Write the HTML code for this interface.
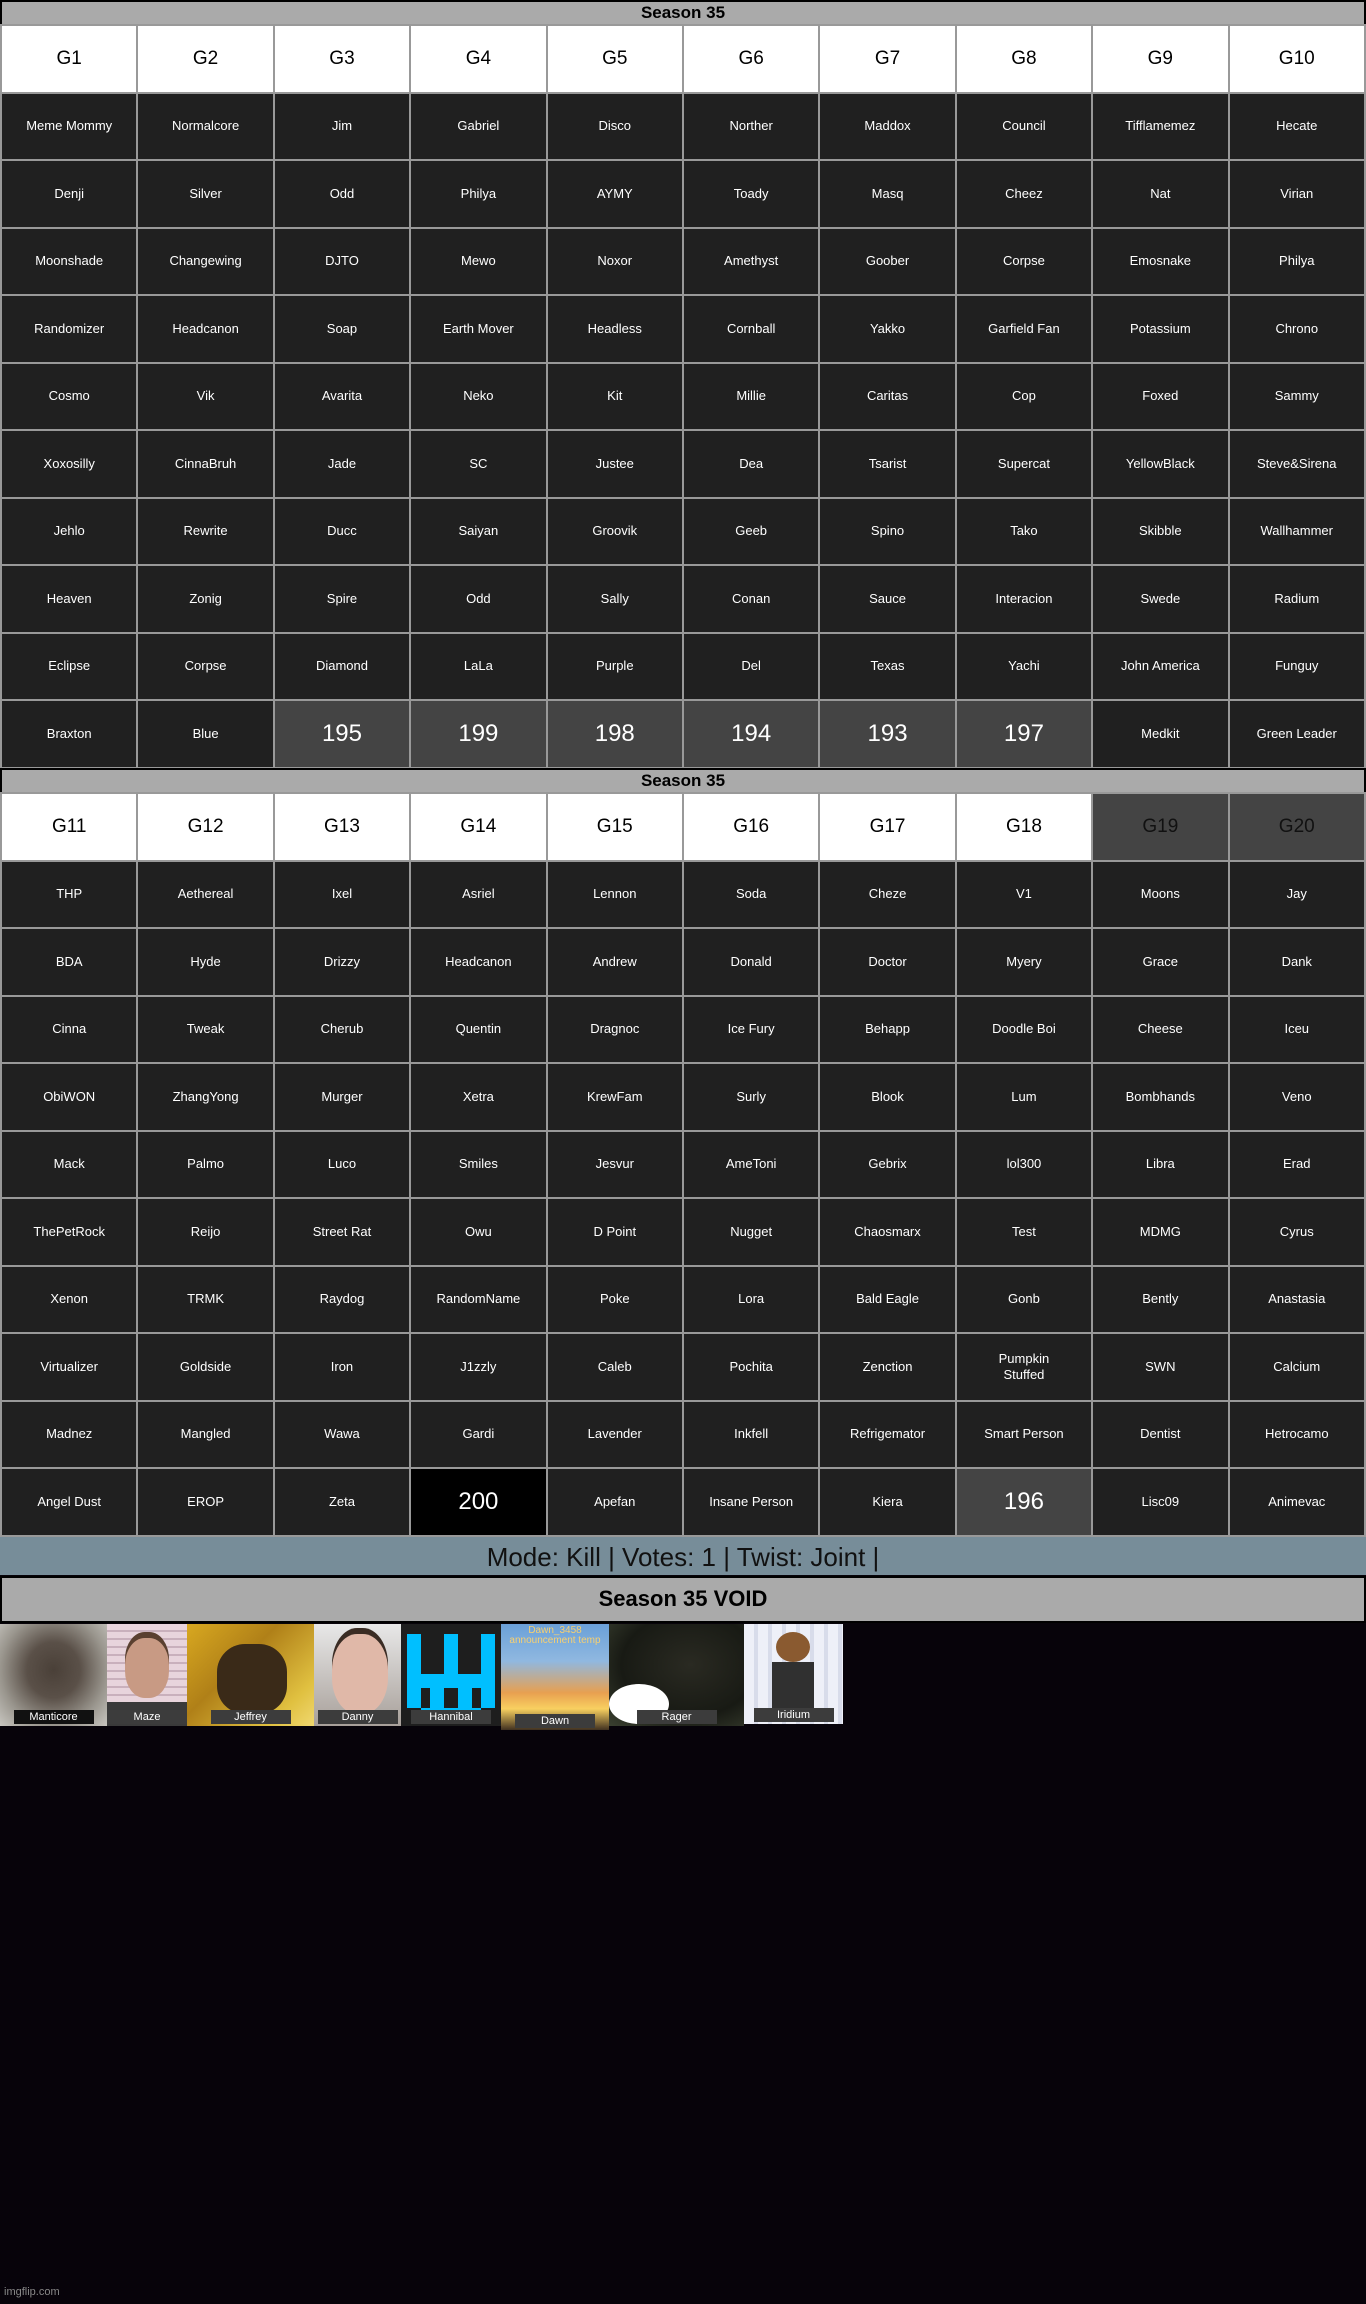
<!DOCTYPE html>
<html><head><meta charset="utf-8"><style>
*{margin:0;padding:0;box-sizing:border-box}
html,body{width:1366px;height:2304px;background:#07030a;overflow:hidden;font-family:"Liberation Sans",sans-serif}
.title{position:absolute;left:0;width:1366px;height:26px;background:#aaa;border:2px solid #000;text-align:center;font-weight:bold;font-size:17px;line-height:22px;color:#000}
table{position:absolute;left:0;width:1366px;border-collapse:collapse;table-layout:fixed}
td{border:2px solid #999;background:#202020;color:#fff;text-align:center;vertical-align:middle;font-size:13px;height:67.5px;line-height:16px}
tr.h td{background:#fff;color:#000;font-size:19px}
tr.h td.d{background:#444;color:#111}
td.n{background:#444;font-size:24px}
td.b{background:#000;font-size:24px}
.mode{position:absolute;left:0;top:1535px;width:1366px;height:40px;background:#778d99;text-align:center;font-size:26px;line-height:40px;color:#111;border-top:2px solid #999}
.void{position:absolute;left:0;top:1576px;width:1366px;height:47px;background:#aaa;border:2px solid #000;text-align:center;font-weight:bold;font-size:22px;line-height:42px;color:#000}
.im{position:absolute;top:1624px;height:102px;overflow:hidden}
.lb{position:absolute;bottom:2px;left:50%;transform:translateX(-50%);width:80px;height:14px;background:#3c3c3c;color:#fff;font-size:11px;line-height:14px;text-align:center}
.wm{position:absolute;left:4px;top:2286px;color:#888;font-size:11px}
</style></head><body>
<div class="title" style="top:0">Season 35</div>
<table style="top:24px">
<tr class="h"><td>G1</td><td>G2</td><td>G3</td><td>G4</td><td>G5</td><td>G6</td><td>G7</td><td>G8</td><td>G9</td><td>G10</td></tr>
<tr><td>Meme Mommy</td><td>Normalcore</td><td>Jim</td><td>Gabriel</td><td>Disco</td><td>Norther</td><td>Maddox</td><td>Council</td><td>Tifflamemez</td><td>Hecate</td></tr>
<tr><td>Denji</td><td>Silver</td><td>Odd</td><td>Philya</td><td>AYMY</td><td>Toady</td><td>Masq</td><td>Cheez</td><td>Nat</td><td>Virian</td></tr>
<tr><td>Moonshade</td><td>Changewing</td><td>DJTO</td><td>Mewo</td><td>Noxor</td><td>Amethyst</td><td>Goober</td><td>Corpse</td><td>Emosnake</td><td>Philya</td></tr>
<tr><td>Randomizer</td><td>Headcanon</td><td>Soap</td><td>Earth Mover</td><td>Headless</td><td>Cornball</td><td>Yakko</td><td>Garfield Fan</td><td>Potassium</td><td>Chrono</td></tr>
<tr><td>Cosmo</td><td>Vik</td><td>Avarita</td><td>Neko</td><td>Kit</td><td>Millie</td><td>Caritas</td><td>Cop</td><td>Foxed</td><td>Sammy</td></tr>
<tr><td>Xoxosilly</td><td>CinnaBruh</td><td>Jade</td><td>SC</td><td>Justee</td><td>Dea</td><td>Tsarist</td><td>Supercat</td><td>YellowBlack</td><td>Steve&amp;Sirena</td></tr>
<tr><td>Jehlo</td><td>Rewrite</td><td>Ducc</td><td>Saiyan</td><td>Groovik</td><td>Geeb</td><td>Spino</td><td>Tako</td><td>Skibble</td><td>Wallhammer</td></tr>
<tr><td>Heaven</td><td>Zonig</td><td>Spire</td><td>Odd</td><td>Sally</td><td>Conan</td><td>Sauce</td><td>Interacion</td><td>Swede</td><td>Radium</td></tr>
<tr><td>Eclipse</td><td>Corpse</td><td>Diamond</td><td>LaLa</td><td>Purple</td><td>Del</td><td>Texas</td><td>Yachi</td><td>John America</td><td>Funguy</td></tr>
<tr><td>Braxton</td><td>Blue</td><td class="n">195</td><td class="n">199</td><td class="n">198</td><td class="n">194</td><td class="n">193</td><td class="n">197</td><td>Medkit</td><td>Green Leader</td></tr>
</table>
<div class="title" style="top:768px">Season 35</div>
<table style="top:792px">
<tr class="h"><td>G11</td><td>G12</td><td>G13</td><td>G14</td><td>G15</td><td>G16</td><td>G17</td><td>G18</td><td class="d">G19</td><td class="d">G20</td></tr>
<tr><td>THP</td><td>Aethereal</td><td>Ixel</td><td>Asriel</td><td>Lennon</td><td>Soda</td><td>Cheze</td><td>V1</td><td>Moons</td><td>Jay</td></tr>
<tr><td>BDA</td><td>Hyde</td><td>Drizzy</td><td>Headcanon</td><td>Andrew</td><td>Donald</td><td>Doctor</td><td>Myery</td><td>Grace</td><td>Dank</td></tr>
<tr><td>Cinna</td><td>Tweak</td><td>Cherub</td><td>Quentin</td><td>Dragnoc</td><td>Ice Fury</td><td>Behapp</td><td>Doodle Boi</td><td>Cheese</td><td>Iceu</td></tr>
<tr><td>ObiWON</td><td>ZhangYong</td><td>Murger</td><td>Xetra</td><td>KrewFam</td><td>Surly</td><td>Blook</td><td>Lum</td><td>Bombhands</td><td>Veno</td></tr>
<tr><td>Mack</td><td>Palmo</td><td>Luco</td><td>Smiles</td><td>Jesvur</td><td>AmeToni</td><td>Gebrix</td><td>lol300</td><td>Libra</td><td>Erad</td></tr>
<tr><td>ThePetRock</td><td>Reijo</td><td>Street Rat</td><td>Owu</td><td>D Point</td><td>Nugget</td><td>Chaosmarx</td><td>Test</td><td>MDMG</td><td>Cyrus</td></tr>
<tr><td>Xenon</td><td>TRMK</td><td>Raydog</td><td>RandomName</td><td>Poke</td><td>Lora</td><td>Bald Eagle</td><td>Gonb</td><td>Bently</td><td>Anastasia</td></tr>
<tr><td>Virtualizer</td><td>Goldside</td><td>Iron</td><td>J1zzly</td><td>Caleb</td><td>Pochita</td><td>Zenction</td><td>Pumpkin<br>Stuffed</td><td>SWN</td><td>Calcium</td></tr>
<tr><td>Madnez</td><td>Mangled</td><td>Wawa</td><td>Gardi</td><td>Lavender</td><td>Inkfell</td><td>Refrigemator</td><td>Smart Person</td><td>Dentist</td><td>Hetrocamo</td></tr>
<tr><td>Angel Dust</td><td>EROP</td><td>Zeta</td><td class="b">200</td><td>Apefan</td><td>Insane Person</td><td>Kiera</td><td class="n">196</td><td>Lisc09</td><td>Animevac</td></tr>
</table>
<div class="mode">Mode: Kill | Votes: 1 | Twist: Joint |</div>
<div class="void">Season 35 VOID</div>

<div class="im" style="left:0;width:107px;background:radial-gradient(ellipse at 50% 45%,#4a4038 0%,#5a5048 35%,#9a968e 70%,#c8c6c0 100%)"><div class="lb" style="background:#111">Manticore</div></div>
<div class="im" style="left:107px;width:80px;background:repeating-linear-gradient(#e8d4dc 0 6px,#c9b0bc 6px 8px)"><div style="position:absolute;left:18px;top:14px;width:44px;height:60px;border-radius:45%;background:#c89a84;box-shadow:0 -6px 0 #5a4030"></div><div style="position:absolute;left:0;top:78px;width:80px;height:24px;background:#3a3a3a"></div><div class="lb">Maze</div></div>
<div class="im" style="left:187px;width:127px;background:linear-gradient(135deg,#d8a820,#b08018 40%,#e0c040 80%,#f0d870)"><div style="position:absolute;left:30px;top:20px;width:70px;height:70px;border-radius:40%;background:#3a2a18"></div><div class="lb">Jeffrey</div></div>
<div class="im" style="left:314px;width:87px;background:linear-gradient(#e8e8e8,#a8a09a)"><div style="position:absolute;left:18px;top:10px;width:56px;height:80px;border-radius:45%;background:#e0b8a8;box-shadow:0 -6px 0 #3a2c24"></div><div class="lb">Danny</div></div>
<div class="im" style="left:401px;width:100px;background:#222">
<svg width="100" height="102" style="position:absolute;left:0;top:0"><rect width="100" height="102" fill="#1e1e1e"/><g fill="#00bfff"><rect x="6" y="10" width="14" height="40"/><rect x="43" y="10" width="14" height="40"/><rect x="80" y="10" width="14" height="40"/><rect x="6" y="50" width="88" height="14"/><rect x="6" y="64" width="14" height="20"/><rect x="80" y="64" width="14" height="20"/><rect x="29" y="64" width="14" height="20"/><rect x="57" y="64" width="14" height="20"/><rect x="20" y="84" width="60" height="10"/></g></svg><div class="lb">Hannibal</div></div>
<div class="im" style="left:501px;width:108px;height:106px;background:linear-gradient(#6aa0d8,#90b8e0 35%,#e8a050 65%,#f8d060 80%,#403020)"><div style="position:absolute;top:2px;width:108px;text-align:center;color:#f8d070;font-size:10px;line-height:10px">Dawn_3458<br>announcement temp</div><div class="lb">Dawn</div></div>
<div class="im" style="left:609px;width:135px;background:radial-gradient(ellipse at 60% 40%,#2a2a22,#181a14 60%,#3a4030)"><div style="position:absolute;left:0;top:60px;width:60px;height:40px;border-radius:50%;background:#fff"></div><div class="lb">Rager</div></div>
<div class="im" style="left:744px;width:99px;height:100px;background:repeating-linear-gradient(90deg,#eef0f8 0 10px,#d8dcea 10px 14px)"><div style="position:absolute;left:32px;top:8px;width:34px;height:30px;border-radius:50%;background:#8a5a30"></div><div style="position:absolute;left:28px;top:38px;width:42px;height:52px;background:#303030"></div><div class="lb">Iridium</div></div>

<div class="wm">imgflip.com</div>
</body></html>
